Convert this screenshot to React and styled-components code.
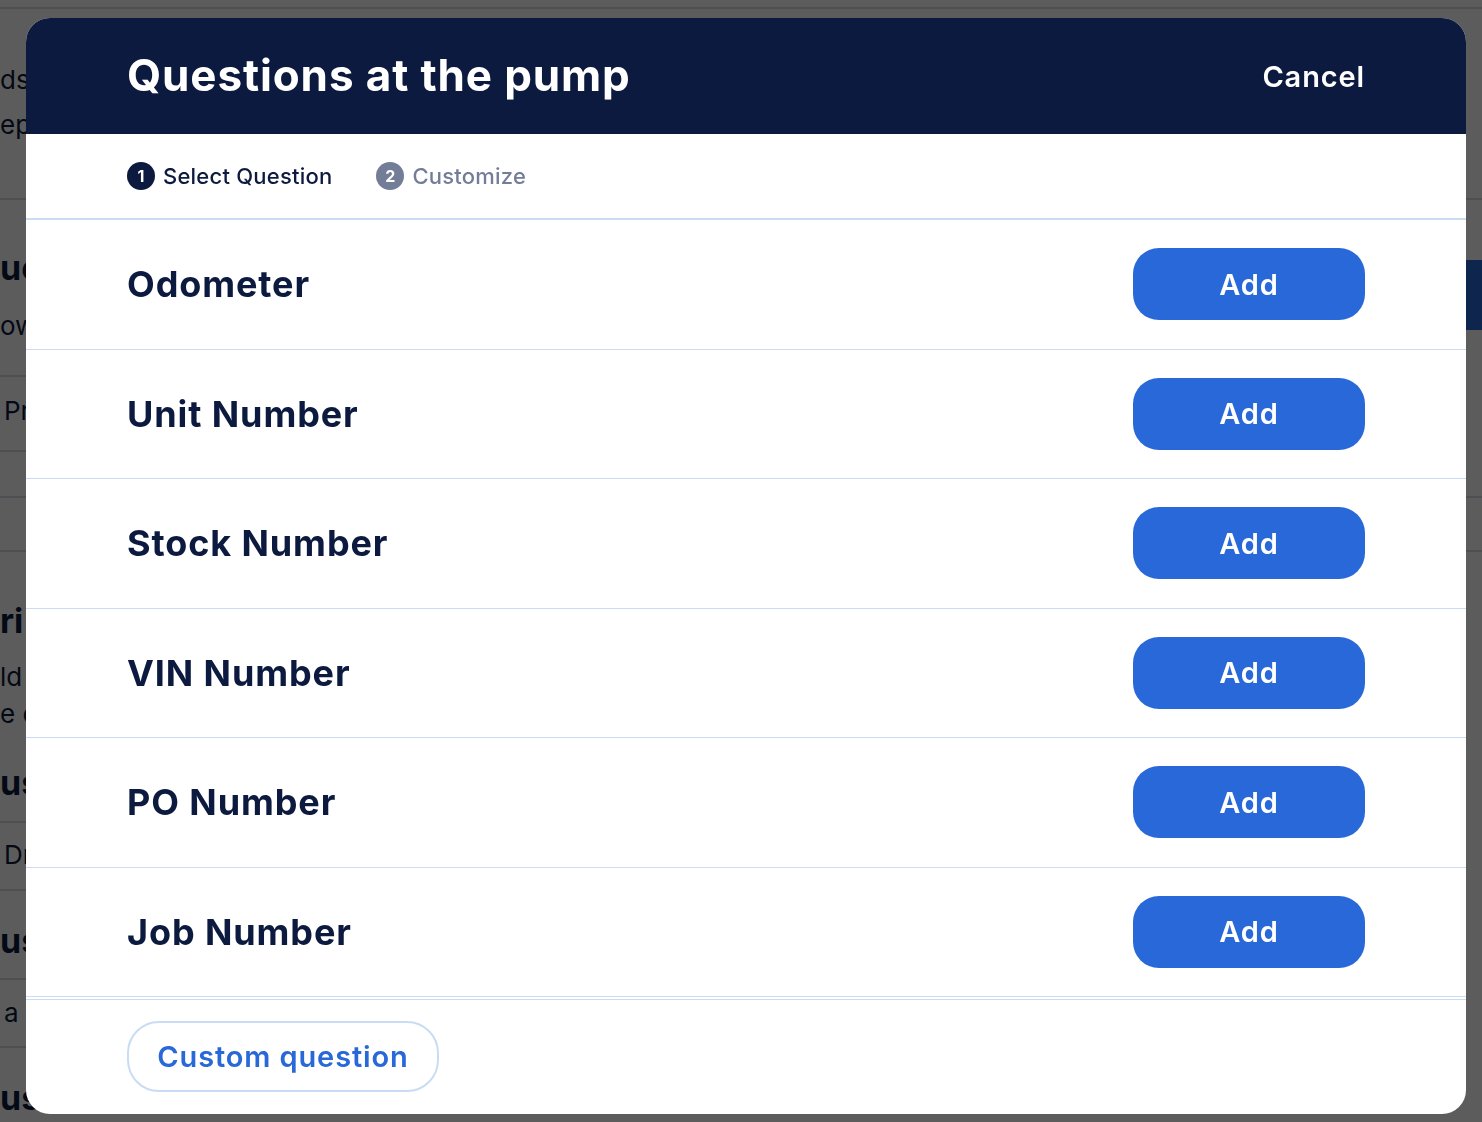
import React from 'react';
import styled, { createGlobalStyle } from 'styled-components';

const navy = '#0c1a3f';
const blue = '#2968d8';
const line = '#c9dcf3';
const pageLine = '#d4dae4';

const GlobalStyle = createGlobalStyle`
  html, body {
    margin: 0;
    padding: 0;
    background: #ffffff;
    font-family: Inter, "Open Sans", Roboto, sans-serif;
    color: ${navy};
  }
  * { box-sizing: border-box; }
`;

/* ---- page behind the dialog ---- */

const Page = styled.div`
  width: 1482px;
  height: 1122px;
  overflow: hidden;
  display: flex;
  flex-direction: column;
  background: #ffffff;
`;

const PageTop = styled.div`
  height: 9px;
  flex-shrink: 0;
  border-bottom: 2px solid ${pageLine};
`;

// a band of the page; $full draws a rule across the whole width
const Section = styled.div`
  height: ${p => p.$h}px;
  flex-shrink: 0;
  display: flex;
  justify-content: space-between;
  align-items: stretch;
  border-bottom: ${p => (p.$full ? `2px solid ${pageLine}` : 'none')};
`;

// left content cell; $rule draws a rule under the left column only
const Cell = styled.div`
  width: 800px;
  display: flex;
  flex-direction: column;
  padding-top: ${p => p.$pt || 0}px;
  border-bottom: ${p => (p.$rule ? `2px solid ${pageLine}` : 'none')};
`;

const PageText = styled.div`
  white-space: nowrap;
  font-size: ${p => (p.$bold ? 34 : 26)}px;
  font-weight: ${p => (p.$bold ? 700 : 400)};
  line-height: ${p => (p.$bold ? 41 : 31)}px;
  color: ${navy};
  margin-left: ${p => p.$indent || 0}px;
  margin-top: ${p => p.$mt || 0}px;
`;

const PageButton = styled.div`
  width: 220px;
  height: 70px;
  margin-top: 60px;
  margin-right: -40px;
  border-radius: 20px;
  background: ${blue};
`;

const Overlay = styled.div`
  position: fixed;
  inset: 0;
  background: rgba(0, 0, 0, 0.64);
  display: flex;
  align-items: flex-start;
  padding: 18px 16px 8px 26px;
`;

/* ---- dialog ---- */

const Modal = styled.div`
  width: 1440px;
  height: 1096px;
  background: #ffffff;
  border-radius: 24px;
  overflow: hidden;
  display: flex;
  flex-direction: column;
`;

const Header = styled.div`
  height: 116px;
  flex-shrink: 0;
  background: ${navy};
  display: flex;
  align-items: center;
  justify-content: space-between;
  padding: 0 101px;
`;

const Title = styled.h1`
  margin: 0 0 2px;
  font-size: 44px;
  font-weight: 700;
  letter-spacing: 0.02em;
  color: #ffffff;
`;

const Cancel = styled.button`
  border: none;
  background: none;
  padding: 0;
  font-family: inherit;
  font-size: 29px;
  font-weight: 600;
  letter-spacing: 0.03em;
  color: #ffffff;
  cursor: pointer;
`;

const Steps = styled.div`
  height: 86px;
  flex-shrink: 0;
  display: flex;
  align-items: center;
  gap: 44px;
  padding: 0 101px;
  border-bottom: 2px solid ${line};
`;

const Step = styled.div`
  display: flex;
  align-items: center;
  gap: 8px;
  font-size: 22px;
  font-weight: 500;
  letter-spacing: 0.01em;
  color: ${p => (p.$active ? navy : '#737d97')};
`;

const StepDot = styled.span`
  width: 28px;
  height: 28px;
  border-radius: 50%;
  display: flex;
  align-items: center;
  justify-content: center;
  font-size: 16px;
  font-weight: 700;
  color: #ffffff;
  background: ${p => (p.$active ? navy : '#737d97')};
`;

const List = styled.div`
  flex-shrink: 0;
  display: flex;
  flex-direction: column;
`;

const Row = styled.div`
  height: 129.5px;
  display: flex;
  align-items: center;
  justify-content: space-between;
  padding: 0 101px;
  border-bottom: 1px solid ${line};
`;

const Label = styled.div`
  font-size: 36px;
  font-weight: 700;
  letter-spacing: 0.025em;
  color: ${navy};
`;

const AddButton = styled.button`
  width: 232px;
  height: 72px;
  border: none;
  border-radius: 26px;
  background: ${blue};
  color: #ffffff;
  font-family: inherit;
  font-size: 29px;
  font-weight: 600;
  letter-spacing: 0.03em;
  cursor: pointer;
`;

const Footer = styled.div`
  margin-top: 2px;
  padding: 21px 101px;
  border-top: 1px solid ${line};
`;

const CustomButton = styled.button`
  width: 312px;
  height: 71px;
  border: 2px solid ${line};
  border-radius: 32px;
  background: #ffffff;
  color: ${blue};
  font-family: inherit;
  font-size: 29px;
  font-weight: 600;
  letter-spacing: 0.03em;
  cursor: pointer;
`;

const questions = ['Odometer', 'Unit Number', 'Stock Number', 'VIN Number', 'PO Number', 'Job Number'];

export default function App() {
  return (
    <>
      <GlobalStyle />
      <Page>
        <PageTop />
        <Section $h={191} $full>
          <Cell $pt={55}>
            <PageText>ds</PageText>
            <PageText $mt={14}>ep</PageText>
          </Cell>
        </Section>
        <Section $h={177}>
          <Cell $pt={47} $rule>
            <PageText $bold>ue</PageText>
            <PageText $mt={22}>ow</PageText>
          </Cell>
          <PageButton />
        </Section>
        <Section $h={75}>
          <Cell $pt={18} $rule>
            <PageText $indent={4}>Pr</PageText>
          </Cell>
        </Section>
        <Section $h={46} $full />
        <Section $h={54} $full />
        <Section $h={271}>
          <Cell $pt={48} $rule>
            <PageText $bold>ri</PageText>
            <PageText $mt={20}>ld</PageText>
            <PageText $mt={6}>e c</PageText>
            <PageText $bold $mt={33}>us</PageText>
          </Cell>
        </Section>
        <Section $h={68}>
          <Cell $pt={16} $rule>
            <PageText $indent={4}>Dr</PageText>
          </Cell>
        </Section>
        <Section $h={89}>
          <Cell $pt={29} $rule>
            <PageText $bold>us</PageText>
          </Cell>
        </Section>
        <Section $h={68}>
          <Cell $pt={17} $rule>
            <PageText $indent={4}>a</PageText>
          </Cell>
        </Section>
        <Section $h={80}>
          <Cell $pt={29}>
            <PageText $bold>us</PageText>
          </Cell>
        </Section>
      </Page>
      <Overlay>
        <Modal>
          <Header>
            <Title>Questions at the pump</Title>
            <Cancel>Cancel</Cancel>
          </Header>
          <Steps>
            <Step $active>
              <StepDot $active>1</StepDot>
              Select Question
            </Step>
            <Step>
              <StepDot>2</StepDot>
              Customize
            </Step>
          </Steps>
          <List>
            {questions.map(q => (
              <Row key={q}>
                <Label>{q}</Label>
                <AddButton>Add</AddButton>
              </Row>
            ))}
          </List>
          <Footer>
            <CustomButton>Custom question</CustomButton>
          </Footer>
        </Modal>
      </Overlay>
    </>
  );
}
